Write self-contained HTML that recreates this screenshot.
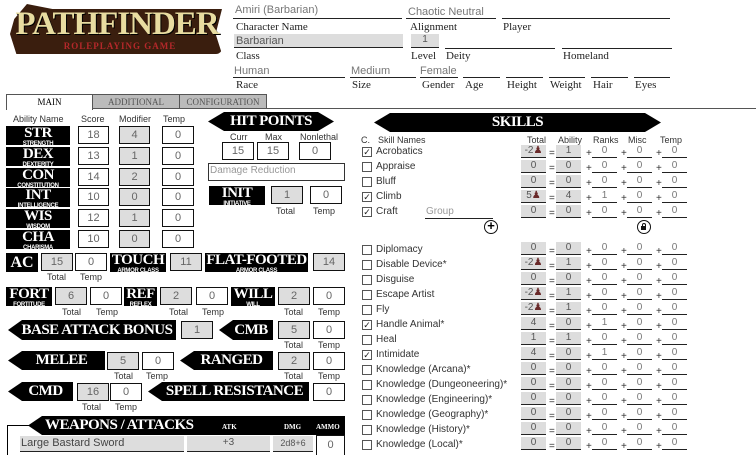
<!DOCTYPE html>
<html><head><meta charset="utf-8"><style>
*{margin:0;padding:0;box-sizing:border-box}
body{width:756px;height:454px;overflow:hidden;background:#fff;position:relative;font-family:"Liberation Sans",sans-serif}
div,span{position:absolute}
.h{font-family:"Liberation Sans",sans-serif;color:#777;font-size:11px}
.s{font-family:"Liberation Serif",serif;color:#222;font-size:11px}
.ln{height:1px;background:#222}
.b{border:1px solid #111;background:#fff;color:#666;font-size:11px;text-align:center;height:18px;line-height:16px;width:32px}
.g{background:#ddd}
.l{font-size:9px;color:#333}
.k{background:#000;color:#fff;font-family:"Liberation Serif",serif;font-weight:bold;text-align:center;line-height:1}
.k b{display:block;font-size:15px;letter-spacing:-0.5px}
.k i{display:block;font-style:normal;font-family:"Liberation Sans",sans-serif;font-size:6px;font-weight:bold;letter-spacing:-0.3px}
.ban{background:#000;color:#fff;font-family:"Liberation Serif",serif;font-weight:bold;font-size:15px;text-align:center;clip-path:polygon(0 50%,14px 0,100% 0,100% 100%,14px 100%);letter-spacing:-0.5px}
.ban2{clip-path:polygon(0 50%,16px 0,calc(100% - 16px) 0,100% 50%,calc(100% - 16px) 100%,16px 100%)}
.sk{font-size:10px;color:#333}
.cb{width:10px;height:10px;border:1px solid #555;font-size:9px;line-height:8px;text-align:center;color:#222}
.tv{width:25px;height:13px;background:#ddd;border-bottom:1px solid #222;color:#555;font-size:10px;text-align:center;line-height:12px}
.uv{width:25px;height:13px;border-bottom:1px solid #222;color:#777;font-size:10px;text-align:center;line-height:12px}
.op{font-size:10px;color:#333}
.tab{top:94px;height:15px;font-family:"Liberation Serif",serif;font-size:9px;text-align:center;line-height:14px;border:1px solid #555}
</style></head><body>

<!-- logo -->
<div style="left:10px;top:4px;width:212px;height:50px;background:#3a1e0e;border-radius:6px;clip-path:polygon(2% 30%,8% 0,20% 10%,100% 10%,97% 60%,100% 100%,3% 100%,0 60%)"></div>
<div style="left:14px;top:6px;width:206px;text-align:center;font-family:'Liberation Serif',serif;font-weight:bold;font-size:33px;color:#e8dca0;letter-spacing:-1px;line-height:36px;text-shadow:1px 1px 0 #000">PATHFINDER</div>
<div style="left:40px;top:41px;width:160px;text-align:center;font-family:'Liberation Serif',serif;font-weight:bold;font-size:9px;color:#b4282a;letter-spacing:1px">ROLEPLAYING GAME</div>

<!-- header -->
<div class="h" style="left:235px;top:4px">Amiri (Barbarian)</div>
<div class="ln" style="left:233px;top:18px;width:169px"></div>
<div class="h" style="left:408px;top:6px">Chaotic Neutral</div>
<div class="ln" style="left:406px;top:18px;width:90px"></div>
<div class="ln" style="left:502px;top:18px;width:168px"></div>
<div class="s" style="left:236px;top:21px">Character Name</div>
<div class="s" style="left:410px;top:21px">Alignment</div>
<div class="s" style="left:503px;top:21px">Player</div>
<div style="left:234px;top:34px;width:169px;height:14px;background:#ddd;border-bottom:1px solid #222"></div>
<div class="h" style="left:236px;top:35px;color:#555">Barbarian</div>
<div style="left:411px;top:34px;width:28px;height:14px;background:#ddd;border-bottom:1px solid #222;text-align:center;font-size:10px;color:#555">1</div>
<div class="ln" style="left:445px;top:48px;width:110px"></div>
<div class="ln" style="left:562px;top:48px;width:110px"></div>
<div class="s" style="left:236px;top:50px">Class</div>
<div class="s" style="left:411px;top:50px">Level</div>
<div class="s" style="left:446px;top:50px">Deity</div>
<div class="s" style="left:563px;top:50px">Homeland</div>
<div class="h" style="left:234px;top:65px">Human</div>
<div class="ln" style="left:233px;top:77px;width:112px"></div>
<div class="h" style="left:351px;top:65px">Medium</div>
<div class="ln" style="left:350px;top:77px;width:66px"></div>
<div class="h" style="left:420px;top:65px">Female</div>
<div class="ln" style="left:420px;top:77px;width:38px"></div>
<div class="ln" style="left:463px;top:77px;width:37px"></div>
<div class="ln" style="left:506px;top:77px;width:37px"></div>
<div class="ln" style="left:549px;top:77px;width:36px"></div>
<div class="ln" style="left:591px;top:77px;width:37px"></div>
<div class="ln" style="left:634px;top:77px;width:36px"></div>
<div class="s" style="left:236px;top:79px">Race</div>
<div class="s" style="left:352px;top:79px">Size</div>
<div class="s" style="left:422px;top:79px">Gender</div>
<div class="s" style="left:465px;top:79px">Age</div>
<div class="s" style="left:507px;top:79px">Height</div>
<div class="s" style="left:550px;top:79px">Weight</div>
<div class="s" style="left:593px;top:79px">Hair</div>
<div class="s" style="left:635px;top:79px">Eyes</div>

<!-- tabs -->
<div class="ln" style="left:6px;top:108px;width:750px;background:#555"></div>
<div class="tab" style="left:6px;width:87px;background:#fff;border-bottom:none;height:16px">MAIN</div>
<div class="tab" style="left:92px;width:88px;background:#bbb;color:#555">ADDITIONAL</div>
<div class="tab" style="left:179px;width:88px;background:#bbb;color:#555">CONFIGURATION</div>

<!-- abilities -->
<div class="l" style="left:13px;top:114px">Ability Name</div>
<div class="l" style="left:81px;top:114px">Score</div>
<div class="l" style="left:119px;top:114px">Modifier</div>
<div class="l" style="left:163px;top:114px">Temp</div>

<div class="k" style="left:6px;top:126px;width:64px;height:19px"><b>STR</b><i>STRENGTH</i></div>
<div class="b" style="left:78px;top:126px;width:31px">18</div><div class="b g" style="left:119px;top:126px;width:31px">4</div><div class="b" style="left:162px;top:126px;width:32px">0</div>
<div class="k" style="left:6px;top:147px;width:64px;height:19px"><b>DEX</b><i>DEXTERITY</i></div>
<div class="b" style="left:78px;top:147px;width:31px">13</div><div class="b g" style="left:119px;top:147px;width:31px">1</div><div class="b" style="left:162px;top:147px;width:32px">0</div>
<div class="k" style="left:6px;top:168px;width:64px;height:19px"><b>CON</b><i>CONSTITUTION</i></div>
<div class="b" style="left:78px;top:168px;width:31px">14</div><div class="b g" style="left:119px;top:168px;width:31px">2</div><div class="b" style="left:162px;top:168px;width:32px">0</div>
<div class="k" style="left:6px;top:188px;width:64px;height:19px"><b>INT</b><i>INTELLIGENCE</i></div>
<div class="b" style="left:78px;top:188px;width:31px">10</div><div class="b g" style="left:119px;top:188px;width:31px">0</div><div class="b" style="left:162px;top:188px;width:32px">0</div>
<div class="k" style="left:6px;top:209px;width:64px;height:19px"><b>WIS</b><i>WISDOM</i></div>
<div class="b" style="left:78px;top:209px;width:31px">12</div><div class="b g" style="left:119px;top:209px;width:31px">1</div><div class="b" style="left:162px;top:209px;width:32px">0</div>
<div class="k" style="left:6px;top:230px;width:64px;height:19px"><b>CHA</b><i>CHARISMA</i></div>
<div class="b" style="left:78px;top:230px;width:31px">10</div><div class="b g" style="left:119px;top:230px;width:31px">0</div><div class="b" style="left:162px;top:230px;width:32px">0</div>

<!-- HP -->
<div class="ban ban2" style="left:208px;top:112px;width:126px;height:19px;line-height:19px">HIT POINTS</div>
<div class="l" style="left:230px;top:132px">Curr</div>
<div class="l" style="left:265px;top:132px">Max</div>
<div class="l" style="left:300px;top:132px">Nonlethal</div>
<div class="b" style="left:222px;top:142px">15</div>
<div class="b" style="left:257px;top:142px">15</div>
<div class="b" style="left:299px;top:142px">0</div>
<div style="left:208px;top:163px;width:137px;height:18px;border:1px solid #333;font-size:10px;color:#999;padding-left:1px;line-height:13px">Damage Reduction</div>
<div class="k" style="left:209px;top:186px;width:56px;height:19px"><b>INIT</b><i>INITIATIVE</i></div>
<div class="b g" style="left:271px;top:186px">1</div>
<div class="b" style="left:310px;top:186px">0</div>
<div class="l" style="left:276px;top:206px">Total</div>
<div class="l" style="left:313px;top:206px">Temp</div>

<!-- AC -->
<div class="k" style="left:6px;top:253px;width:32px;height:19px;font-size:16px;line-height:19px">AC</div>
<div class="b g" style="left:41px;top:253px">15</div>
<div class="b" style="left:75px;top:253px">0</div>
<div class="k" style="left:110px;top:253px;width:56px;height:19px"><b>TOUCH</b><i>ARMOR CLASS</i></div>
<div class="b g" style="left:170px;top:253px">11</div>
<div class="k" style="left:205px;top:253px;width:103px;height:19px"><b>FLAT-FOOTED</b><i>ARMOR CLASS</i></div>
<div class="b g" style="left:313px;top:253px">14</div>
<div class="l" style="left:47px;top:272px">Total</div>
<div class="l" style="left:80px;top:272px">Temp</div>

<!-- saves -->
<div class="k" style="left:6px;top:287px;width:46px;height:19px"><b>FORT</b><i>FORTITUDE</i></div>
<div class="b g" style="left:55px;top:287px">6</div>
<div class="b" style="left:90px;top:287px">0</div>
<div class="k" style="left:124px;top:287px;width:33px;height:19px"><b>REF</b><i>REFLEX</i></div>
<div class="b g" style="left:160px;top:287px">2</div>
<div class="b" style="left:196px;top:287px">0</div>
<div class="k" style="left:231px;top:287px;width:44px;height:19px"><b>WILL</b><i>WILL</i></div>
<div class="b g" style="left:278px;top:287px">2</div>
<div class="b" style="left:313px;top:287px">0</div>
<div class="l" style="left:62px;top:307px">Total</div><div class="l" style="left:96px;top:307px">Temp</div>
<div class="l" style="left:169px;top:307px">Total</div><div class="l" style="left:202px;top:307px">Temp</div>
<div class="l" style="left:284px;top:307px">Total</div><div class="l" style="left:318px;top:307px">Temp</div>

<!-- BAB -->
<div class="ban" style="left:8px;top:320px;width:168px;height:20px;line-height:20px;padding-left:10px">BASE ATTACK BONUS</div>
<div class="b g" style="left:181px;top:321px">1</div>
<div class="ban" style="left:219px;top:320px;width:54px;height:20px;line-height:20px;padding-left:10px">CMB</div>
<div class="b g" style="left:278px;top:321px">5</div>
<div class="b" style="left:313px;top:321px">0</div>
<div class="l" style="left:284px;top:340px">Total</div><div class="l" style="left:318px;top:340px">Temp</div>

<div class="ban" style="left:8px;top:351px;width:97px;height:19px;line-height:19px;padding-left:10px">MELEE</div>
<div class="b g" style="left:107px;top:352px">5</div>
<div class="b" style="left:142px;top:352px">0</div>
<div class="l" style="left:114px;top:371px">Total</div><div class="l" style="left:146px;top:371px">Temp</div>
<div class="ban" style="left:180px;top:351px;width:93px;height:19px;line-height:19px;padding-left:10px">RANGED</div>
<div class="b g" style="left:278px;top:352px">2</div>
<div class="b" style="left:313px;top:352px">0</div>
<div class="l" style="left:284px;top:371px">Total</div><div class="l" style="left:318px;top:371px">Temp</div>

<div class="ban" style="left:8px;top:382px;width:65px;height:19px;line-height:19px;padding-left:10px">CMD</div>
<div class="b g" style="left:77px;top:383px">16</div>
<div class="b" style="left:110px;top:383px">0</div>
<div class="l" style="left:82px;top:402px">Total</div><div class="l" style="left:115px;top:402px">Temp</div>
<div class="ban" style="left:148px;top:382px;width:161px;height:19px;line-height:19px;padding-left:12px">SPELL RESISTANCE</div>
<div class="b" style="left:313px;top:383px">0</div>

<!-- weapons -->
<div style="left:7px;top:425px;width:26px;height:30px;border-left:1px solid #000;border-top:1px solid #000"></div>
<div class="ban" style="left:28px;top:416px;width:317px;height:19px;clip-path:polygon(0 50%,14px 0,100% 0,100% 100%,14px 100%)"></div>
<div style="left:45px;top:416px;font-family:'Liberation Serif',serif;font-weight:bold;font-size:15px;color:#fff;letter-spacing:-0.5px;line-height:19px">WEAPONS / ATTACKS</div>
<div style="left:222px;top:423px;font-family:'Liberation Serif',serif;font-weight:bold;font-size:7px;color:#fff">ATK</div>
<div style="left:284px;top:423px;font-family:'Liberation Serif',serif;font-weight:bold;font-size:7px;color:#fff">DMG</div>
<div style="left:316px;top:423px;font-family:'Liberation Serif',serif;font-weight:bold;font-size:7px;color:#fff">AMMO</div>
<div style="left:20px;top:436px;width:164px;height:16px;background:#ddd;border-bottom:1px solid #222;font-size:11px;color:#444;line-height:15px;padding-left:1px">Large Bastard Sword</div>
<div style="left:187px;top:436px;width:83px;height:16px;background:#ddd;border-bottom:1px solid #222;font-size:10px;color:#555;text-align:center;line-height:14px">+3</div>
<div style="left:273px;top:436px;width:40px;height:16px;background:#ddd;border-bottom:1px solid #222;font-size:9px;color:#555;text-align:center;line-height:14px">2d8+6</div>
<div class="b" style="left:316px;top:435px;width:29px;height:20px;line-height:18px;border-bottom:none">0</div>

<!-- skills -->
<div class="ban ban2" style="left:374px;top:113px;width:287px;height:19px;line-height:19px">SKILLS</div>
<div class="l" style="left:361px;top:135px">C.</div>
<div class="l" style="left:378px;top:135px">Skill Names</div>
<div class="l" style="left:527px;top:135px">Total</div>
<div class="l" style="left:558px;top:135px">Ability</div>
<div class="l" style="left:593px;top:135px">Ranks</div>
<div class="l" style="left:628px;top:135px">Misc</div>
<div class="l" style="left:660px;top:135px">Temp</div>

<div style="left:425px;top:218px;width:68px;height:1px;background:#222"></div>
<div class="h" style="left:426px;top:206px;font-size:10px;color:#999">Group</div>
<div style="left:484px;top:220px;width:14px;height:14px;border:1.5px solid #111;border-radius:50%;font-size:13px;line-height:10px;text-align:center;font-weight:bold">+</div>
<div style="left:637px;top:220px;width:14px;height:14px;border:1.5px solid #111;border-radius:50%"><div style="left:3px;top:5px;width:5px;height:4px;background:#111"></div><div style="left:3.5px;top:2px;width:4px;height:4px;border:1px solid #111;border-bottom:none;border-radius:2px 2px 0 0"></div></div>

<div id="sk"></div>
<!-- rows -->
<div class="cb" style="left:362px;top:147px">✓</div><div class="sk" style="left:376px;top:146px">Acrobatics</div><div class="tv" style="left:521px;top:145px">-2<span style="position:static;color:#6a2a2a">♟</span></div><div class="op" style="left:549px;top:148px">=</div><div class="tv" style="left:556px;top:145px">1</div><div class="op" style="left:586px;top:148px">+</div><div class="uv" style="left:592px;top:145px">0</div><div class="op" style="left:621px;top:148px">+</div><div class="uv" style="left:627px;top:145px">0</div><div class="op" style="left:656px;top:148px">+</div><div class="uv" style="left:662px;top:145px">0</div>
<div class="cb" style="left:362px;top:162px"></div><div class="sk" style="left:376px;top:161px">Appraise</div><div class="tv" style="left:521px;top:160px">0</div><div class="op" style="left:549px;top:163px">=</div><div class="tv" style="left:556px;top:160px">0</div><div class="op" style="left:586px;top:163px">+</div><div class="uv" style="left:592px;top:160px">0</div><div class="op" style="left:621px;top:163px">+</div><div class="uv" style="left:627px;top:160px">0</div><div class="op" style="left:656px;top:163px">+</div><div class="uv" style="left:662px;top:160px">0</div>
<div class="cb" style="left:362px;top:177px"></div><div class="sk" style="left:376px;top:176px">Bluff</div><div class="tv" style="left:521px;top:175px">0</div><div class="op" style="left:549px;top:178px">=</div><div class="tv" style="left:556px;top:175px">0</div><div class="op" style="left:586px;top:178px">+</div><div class="uv" style="left:592px;top:175px">0</div><div class="op" style="left:621px;top:178px">+</div><div class="uv" style="left:627px;top:175px">0</div><div class="op" style="left:656px;top:178px">+</div><div class="uv" style="left:662px;top:175px">0</div>
<div class="cb" style="left:362px;top:192px">✓</div><div class="sk" style="left:376px;top:191px">Climb</div><div class="tv" style="left:521px;top:190px">5<span style="position:static;color:#6a2a2a">♟</span></div><div class="op" style="left:549px;top:193px">=</div><div class="tv" style="left:556px;top:190px">4</div><div class="op" style="left:586px;top:193px">+</div><div class="uv" style="left:592px;top:190px">1</div><div class="op" style="left:621px;top:193px">+</div><div class="uv" style="left:627px;top:190px">0</div><div class="op" style="left:656px;top:193px">+</div><div class="uv" style="left:662px;top:190px">0</div>
<div class="cb" style="left:362px;top:207px">✓</div><div class="sk" style="left:376px;top:206px">Craft</div><div class="tv" style="left:521px;top:205px">0</div><div class="op" style="left:549px;top:208px">=</div><div class="tv" style="left:556px;top:205px">0</div><div class="op" style="left:586px;top:208px">+</div><div class="uv" style="left:592px;top:205px">0</div><div class="op" style="left:621px;top:208px">+</div><div class="uv" style="left:627px;top:205px">0</div><div class="op" style="left:656px;top:208px">+</div><div class="uv" style="left:662px;top:205px">0</div>

<div class="cb" style="left:362px;top:245px"></div><div class="sk" style="left:376px;top:244px">Diplomacy</div><div class="tv" style="left:521px;top:242px">0</div><div class="op" style="left:549px;top:246px">=</div><div class="tv" style="left:556px;top:242px">0</div><div class="op" style="left:586px;top:246px">+</div><div class="uv" style="left:592px;top:242px">0</div><div class="op" style="left:621px;top:246px">+</div><div class="uv" style="left:627px;top:242px">0</div><div class="op" style="left:656px;top:246px">+</div><div class="uv" style="left:662px;top:242px">0</div>
<div class="cb" style="left:362px;top:260px"></div><div class="sk" style="left:376px;top:259px">Disable Device*</div><div class="tv" style="left:521px;top:257px">-2<span style="position:static;color:#6a2a2a">♟</span></div><div class="op" style="left:549px;top:261px">=</div><div class="tv" style="left:556px;top:257px">1</div><div class="op" style="left:586px;top:261px">+</div><div class="uv" style="left:592px;top:257px">0</div><div class="op" style="left:621px;top:261px">+</div><div class="uv" style="left:627px;top:257px">0</div><div class="op" style="left:656px;top:261px">+</div><div class="uv" style="left:662px;top:257px">0</div>
<div class="cb" style="left:362px;top:275px"></div><div class="sk" style="left:376px;top:274px">Disguise</div><div class="tv" style="left:521px;top:272px">0</div><div class="op" style="left:549px;top:276px">=</div><div class="tv" style="left:556px;top:272px">0</div><div class="op" style="left:586px;top:276px">+</div><div class="uv" style="left:592px;top:272px">0</div><div class="op" style="left:621px;top:276px">+</div><div class="uv" style="left:627px;top:272px">0</div><div class="op" style="left:656px;top:276px">+</div><div class="uv" style="left:662px;top:272px">0</div>
<div class="cb" style="left:362px;top:290px"></div><div class="sk" style="left:376px;top:289px">Escape Artist</div><div class="tv" style="left:521px;top:287px">-2<span style="position:static;color:#6a2a2a">♟</span></div><div class="op" style="left:549px;top:291px">=</div><div class="tv" style="left:556px;top:287px">1</div><div class="op" style="left:586px;top:291px">+</div><div class="uv" style="left:592px;top:287px">0</div><div class="op" style="left:621px;top:291px">+</div><div class="uv" style="left:627px;top:287px">0</div><div class="op" style="left:656px;top:291px">+</div><div class="uv" style="left:662px;top:287px">0</div>
<div class="cb" style="left:362px;top:305px"></div><div class="sk" style="left:376px;top:304px">Fly</div><div class="tv" style="left:521px;top:302px">-2<span style="position:static;color:#6a2a2a">♟</span></div><div class="op" style="left:549px;top:306px">=</div><div class="tv" style="left:556px;top:302px">1</div><div class="op" style="left:586px;top:306px">+</div><div class="uv" style="left:592px;top:302px">0</div><div class="op" style="left:621px;top:306px">+</div><div class="uv" style="left:627px;top:302px">0</div><div class="op" style="left:656px;top:306px">+</div><div class="uv" style="left:662px;top:302px">0</div>
<div class="cb" style="left:362px;top:320px">✓</div><div class="sk" style="left:376px;top:319px">Handle Animal*</div><div class="tv" style="left:521px;top:317px">4</div><div class="op" style="left:549px;top:321px">=</div><div class="tv" style="left:556px;top:317px">0</div><div class="op" style="left:586px;top:321px">+</div><div class="uv" style="left:592px;top:317px">1</div><div class="op" style="left:621px;top:321px">+</div><div class="uv" style="left:627px;top:317px">0</div><div class="op" style="left:656px;top:321px">+</div><div class="uv" style="left:662px;top:317px">0</div>
<div class="cb" style="left:362px;top:335px"></div><div class="sk" style="left:376px;top:334px">Heal</div><div class="tv" style="left:521px;top:332px">1</div><div class="op" style="left:549px;top:336px">=</div><div class="tv" style="left:556px;top:332px">1</div><div class="op" style="left:586px;top:336px">+</div><div class="uv" style="left:592px;top:332px">0</div><div class="op" style="left:621px;top:336px">+</div><div class="uv" style="left:627px;top:332px">0</div><div class="op" style="left:656px;top:336px">+</div><div class="uv" style="left:662px;top:332px">0</div>
<div class="cb" style="left:362px;top:350px">✓</div><div class="sk" style="left:376px;top:349px">Intimidate</div><div class="tv" style="left:521px;top:347px">4</div><div class="op" style="left:549px;top:351px">=</div><div class="tv" style="left:556px;top:347px">0</div><div class="op" style="left:586px;top:351px">+</div><div class="uv" style="left:592px;top:347px">1</div><div class="op" style="left:621px;top:351px">+</div><div class="uv" style="left:627px;top:347px">0</div><div class="op" style="left:656px;top:351px">+</div><div class="uv" style="left:662px;top:347px">0</div>
<div class="cb" style="left:362px;top:365px"></div><div class="sk" style="left:376px;top:364px">Knowledge (Arcana)*</div><div class="tv" style="left:521px;top:362px">0</div><div class="op" style="left:549px;top:366px">=</div><div class="tv" style="left:556px;top:362px">0</div><div class="op" style="left:586px;top:366px">+</div><div class="uv" style="left:592px;top:362px">0</div><div class="op" style="left:621px;top:366px">+</div><div class="uv" style="left:627px;top:362px">0</div><div class="op" style="left:656px;top:366px">+</div><div class="uv" style="left:662px;top:362px">0</div>
<div class="cb" style="left:362px;top:380px"></div><div class="sk" style="left:376px;top:379px">Knowledge (Dungeoneering)*</div><div class="tv" style="left:521px;top:377px">0</div><div class="op" style="left:549px;top:381px">=</div><div class="tv" style="left:556px;top:377px">0</div><div class="op" style="left:586px;top:381px">+</div><div class="uv" style="left:592px;top:377px">0</div><div class="op" style="left:621px;top:381px">+</div><div class="uv" style="left:627px;top:377px">0</div><div class="op" style="left:656px;top:381px">+</div><div class="uv" style="left:662px;top:377px">0</div>
<div class="cb" style="left:362px;top:395px"></div><div class="sk" style="left:376px;top:394px">Knowledge (Engineering)*</div><div class="tv" style="left:521px;top:392px">0</div><div class="op" style="left:549px;top:396px">=</div><div class="tv" style="left:556px;top:392px">0</div><div class="op" style="left:586px;top:396px">+</div><div class="uv" style="left:592px;top:392px">0</div><div class="op" style="left:621px;top:396px">+</div><div class="uv" style="left:627px;top:392px">0</div><div class="op" style="left:656px;top:396px">+</div><div class="uv" style="left:662px;top:392px">0</div>
<div class="cb" style="left:362px;top:410px"></div><div class="sk" style="left:376px;top:409px">Knowledge (Geography)*</div><div class="tv" style="left:521px;top:407px">0</div><div class="op" style="left:549px;top:411px">=</div><div class="tv" style="left:556px;top:407px">0</div><div class="op" style="left:586px;top:411px">+</div><div class="uv" style="left:592px;top:407px">0</div><div class="op" style="left:621px;top:411px">+</div><div class="uv" style="left:627px;top:407px">0</div><div class="op" style="left:656px;top:411px">+</div><div class="uv" style="left:662px;top:407px">0</div>
<div class="cb" style="left:362px;top:425px"></div><div class="sk" style="left:376px;top:424px">Knowledge (History)*</div><div class="tv" style="left:521px;top:422px">0</div><div class="op" style="left:549px;top:426px">=</div><div class="tv" style="left:556px;top:422px">0</div><div class="op" style="left:586px;top:426px">+</div><div class="uv" style="left:592px;top:422px">0</div><div class="op" style="left:621px;top:426px">+</div><div class="uv" style="left:627px;top:422px">0</div><div class="op" style="left:656px;top:426px">+</div><div class="uv" style="left:662px;top:422px">0</div>
<div class="cb" style="left:362px;top:440px"></div><div class="sk" style="left:376px;top:439px">Knowledge (Local)*</div><div class="tv" style="left:521px;top:437px">0</div><div class="op" style="left:549px;top:441px">=</div><div class="tv" style="left:556px;top:437px">0</div><div class="op" style="left:586px;top:441px">+</div><div class="uv" style="left:592px;top:437px">0</div><div class="op" style="left:621px;top:441px">+</div><div class="uv" style="left:627px;top:437px">0</div><div class="op" style="left:656px;top:441px">+</div><div class="uv" style="left:662px;top:437px">0</div>
</body></html>
